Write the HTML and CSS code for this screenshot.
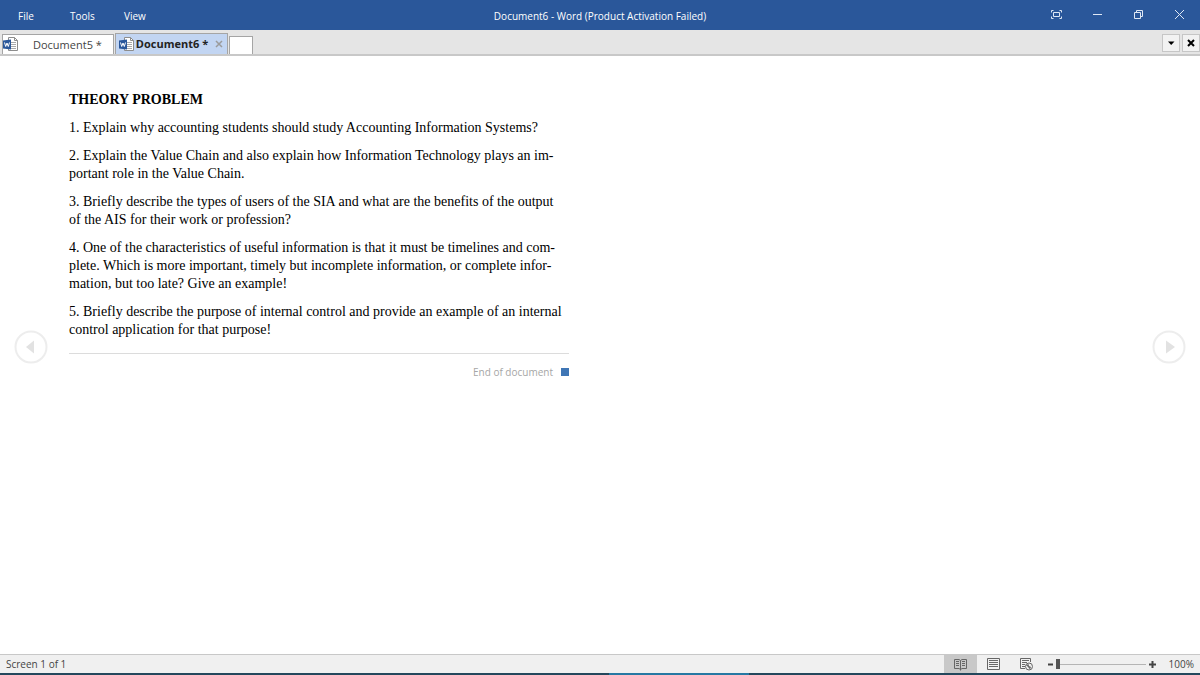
FILE: index.html
```html
<!DOCTYPE html>
<html lang="en">
<head>
<meta charset="utf-8">
<title>Document6 - Word</title>
<link rel="stylesheet" href="styles.css">
</head>
<body>
<svg class="defs" width="0" height="0" aria-hidden="true">
  <symbol id="word" viewBox="0 0 15 15">
    <path d="M5.5.5h6l3 3v10h-9z" fill="#fff" stroke="#8d8d8d"/>
    <path d="M11.5.5v3h3" fill="none" stroke="#8d8d8d"/>
    <path d="M8 5.500h5M8 7.500h5M8 9.500h5M8 11.500h5" stroke="#a9a9a9"/>
    <path d="M0 3.500l8-1v10l-8-1z" fill="#2a579a"/>
    <path d="M1.500 5.500l1.200 4L4 6l1.300 3.500L6.500 5.500" fill="none" stroke="#fff"/>
  </symbol>
</svg>
<header class="titlebar">
  <nav class="menu">
    <button class="menu-item">File</button>
    <button class="menu-item">Tools</button>
    <button class="menu-item">View</button>
  </nav>
  <h1 class="title">Document6 - Word (Product Activation Failed)</h1>
  <div class="window-controls">
    <button class="win" aria-label="Full screen"><svg width="13" height="11" viewBox="0 0 13 11"><path d="M1.500 3.500v-2h2M9.500 1.500h2v2M11.500 7.500v2h-2M3.500 9.500h-2v-2M3.500 3.500h6v4h-6z"/></svg></button>
    <button class="win" aria-label="Minimize"><svg width="13" height="11" viewBox="0 0 13 11"><path d="M2 5.500h9"/></svg></button>
    <button class="win" aria-label="Restore"><svg width="13" height="11" viewBox="0 0 13 11"><path d="M2.500 3.500h6v6h-6zM4.500 3.500v-2h6v6h-2"/></svg></button>
    <button class="win" aria-label="Close"><svg width="13" height="11" viewBox="0 0 13 11"><path d="M2 1l9 9M11 1l-9 9"/></svg></button>
  </div>
</header>
<div class="tabbar">
  <div class="tabs">
    <button class="tab"><svg class="doc-icon" width="15" height="15"><use href="#word"/></svg><span class="tab-name">Document5 *</span></button>
    <div class="tab tab-active"><svg class="doc-icon" width="15" height="15"><use href="#word"/></svg><span>Document6 *</span><button class="tab-close" aria-label="Close tab"><svg width="8" height="8" viewBox="0 0 8 8"><path d="M1 1l6 6M7 1l-6 6" stroke="#9b9b9b" stroke-width="1.500"/></svg></button></div>
    <button class="tab tab-new" aria-label="New tab"></button>
  </div>
  <div class="tab-tools">
    <button class="tool" aria-label="List tabs"><svg width="8" height="8" viewBox="0 0 8 8"><path d="M1 2.500h6.500L4.200 6z"/></svg></button>
    <button class="tool" aria-label="Close document"><svg width="8" height="8" viewBox="0 0 8 8"><path d="M1 1l6 6M7 1L1 7" stroke="#000" stroke-width="2"/></svg></button>
  </div>
</div>
<main class="reader">
  <button class="page-turn" aria-label="Previous screen"><svg width="34" height="34" viewBox="0 0 34 34"><circle cx="17" cy="17" r="15.500" fill="none" stroke="#ededed" stroke-width="2"/><path d="M20 10.500v13L12 17z" fill="#e2e2e2"/></svg></button>
  <article class="page">
    <h2>THEORY PROBLEM</h2>
    <p>1. Explain why accounting students should study Accounting Information Systems?</p>
    <p>2. Explain the Value Chain and also explain how Information Technology plays an im-<br>portant role in the Value Chain.</p>
    <p>3. Briefly describe the types of users of the SIA and what are the benefits of the output<br>of the AIS for their work or profession?</p>
    <p>4. One of the characteristics of useful information is that it must be timelines and com-<br>plete. Which is more important, timely but incomplete information, or complete infor-<br>mation, but too late? Give an example!</p>
    <p>5. Briefly describe the purpose of internal control and provide an example of an internal<br>control application for that purpose!</p>
    <div class="end"><span>End of document</span><i class="end-mark"></i></div>
  </article>
  <button class="page-turn" aria-label="Next screen"><svg width="34" height="34" viewBox="0 0 34 34"><circle cx="17" cy="17" r="15.500" fill="none" stroke="#ededed" stroke-width="2"/><path d="M14 10.500v13l9-6.500z" fill="#e2e2e2"/></svg></button>
</main>
<footer class="status">
  <span>Screen 1 of 1</span>
  <div class="status-tools">
    <button class="view view-active" aria-label="Read mode"><svg width="13" height="13" viewBox="0 0 13 13" fill="none" stroke="#666"><path d="M6.500 2.500L5 1.500H.5v9H5l1.500 1 1.500-1h4.500v-9H8l-1.500 1v10M2 3.500h3M2 5.500h3M2 7.500h3M8 3.500h3M8 5.500h3M8 7.500h3"/></svg></button>
    <button class="view" aria-label="Print layout"><svg width="13" height="13" viewBox="0 0 13 13" fill="none" stroke="#666"><path d="M.5.500h12v11H.5zM2 2.500h9M2 4.500h9M2 6.500h9M2 8.500h9"/></svg></button>
    <button class="view" aria-label="Web layout"><svg width="13" height="13" viewBox="0 0 13 13" fill="none" stroke="#666"><path d="M5 10.500H.5v-10h10V4M2 2.500h7M2 4.500h5M2 6.500h3M2 8.500h3"/><circle cx="9" cy="8.500" r="3.500" fill="#eee"/><path d="M6 7l2.500-1 .5 2 2 1-1 2.500L8 9z" fill="#666" stroke="none"/></svg></button>
    <button class="zoom-step zoom-out" aria-label="Zoom out"><svg width="7" height="7" viewBox="0 0 7 7"><path d="M1 3.500h5" stroke="#444" stroke-width="2"/></svg></button>
    <input class="zoom" type="range" min="0" max="100" value="0" aria-label="Zoom">
    <button class="zoom-step" aria-label="Zoom in"><svg width="7" height="7" viewBox="0 0 7 7"><path d="M0 3.500h7M3.500 0v7" stroke="#444" stroke-width="2"/></svg></button>
    <span class="percent">100%</span>
  </div>
</footer>
<div class="taskbar"><div class="taskbar-active"></div></div>
</body>
</html>
```
FILE: styles.css
```css
* { box-sizing: border-box; }
body {
  margin: 0;
  min-height: 100vh;
  display: flex;
  flex-direction: column;
  background: #fff;
  color: #444;
  font: 10px/14px "Open Sans", "Noto Sans", sans-serif;
}
button {
  padding: 0;
  border: 0;
  background: none;
  color: inherit;
  font: inherit;
}
svg { display: block; flex: none; }
.defs { position: absolute; }
.titlebar {
  height: 30px;
  display: grid;
  grid-template-columns: 1fr auto 1fr;
  align-items: center;
  background: #2a579a;
  color: #fff;
}
.menu {
  display: grid;
  grid-template-columns: 52px 54px auto;
  padding: 2px 0 0 18px;
}
.menu-item { text-align: left; }
.title { margin: 0; padding-top: 2px; font-size: 10px; font-weight: 400; }
.window-controls { display: flex; justify-content: flex-end; }
.win {
  width: 41px;
  height: 30px;
  display: flex;
  align-items: center;
  justify-content: center;
  padding-bottom: 2px;
}
.win svg { fill: none; stroke: #dfe8f5; }
.tabbar {
  height: 26px;
  display: flex;
  justify-content: space-between;
  padding-left: 2px;
  background: #e5e5e5;
  border-bottom: 2px solid #c8c8c8;
}
.tabs { display: flex; align-items: flex-end; gap: 1px; }
.tab {
  height: 20px;
  display: flex;
  align-items: center;
  border: 1px solid #a5a5a5;
  border-bottom: 0;
  background: #fff;
  font-size: 11px;
}
.tab-name { padding: 0 11px 0 15px; }
.tab-active {
  height: 21px;
  gap: 2px;
  padding: 0 4px 0 3px;
  background: #c2d5f2;
  color: #222;
  font-weight: 700;
}
.tab-close { padding: 0 0 0 5px; }
.tab-new { width: 24px; height: 18px; }
.tab-tools { display: flex; align-items: center; gap: 2px; padding-top: 2px; }
.tool {
  width: 18px;
  height: 18px;
  display: flex;
  align-items: center;
  justify-content: center;
  border: 1px solid #c6c6c6;
  background: #f2f2f2;
}
.reader {
  flex: 1;
  display: flex;
  align-items: flex-start;
  padding: 35px 14px 0;
}
.page-turn { flex: none; margin-top: 239px; }
.page {
  width: 500px;
  margin: 0 auto 0 21px;
  color: #000;
  font: 14px/18px "Liberation Serif", serif;
}
.page h2 { margin: 0 0 10px; font-size: 14px; line-height: 18px; }
.page p { margin: 0 0 10px; white-space: nowrap; }
.end {
  display: flex;
  justify-content: flex-end;
  align-items: center;
  gap: 8px;
  margin-top: 14px;
  padding-top: 10px;
  border-top: 1px solid #dcdcdc;
  color: #a6a6a6;
  font: 10px/16px "Open Sans", "Noto Sans", sans-serif;
}
.end-mark { width: 8px; height: 8px; background: #3f76b5; }
.status {
  height: 19px;
  display: flex;
  align-items: center;
  justify-content: space-between;
  padding: 0 6px;
  border-top: 1px solid #c8c8c8;
  background: #f0f0f0;
}
.status-tools { display: flex; align-items: center; }
.view {
  width: 33px;
  height: 18px;
  display: flex;
  align-items: center;
  justify-content: center;
}
.view-active { background: #c8c8c8; }
.zoom-out { margin-left: 4px; }
.zoom {
  appearance: none;
  width: 90px;
  height: 12px;
  margin: 0 3px 0 2px;
  background: linear-gradient(#b5b5b5, #b5b5b5) center / 100% 1px no-repeat;
}
.zoom::-webkit-slider-thumb {
  appearance: none;
  width: 4px;
  height: 10px;
  background: #555;
}
.percent { margin-left: 13px; }
.taskbar { height: 2px; background: #24475c; }
.taskbar-active { width: 140px; height: 2px; margin-left: 609px; background: #2678a3; }
```
